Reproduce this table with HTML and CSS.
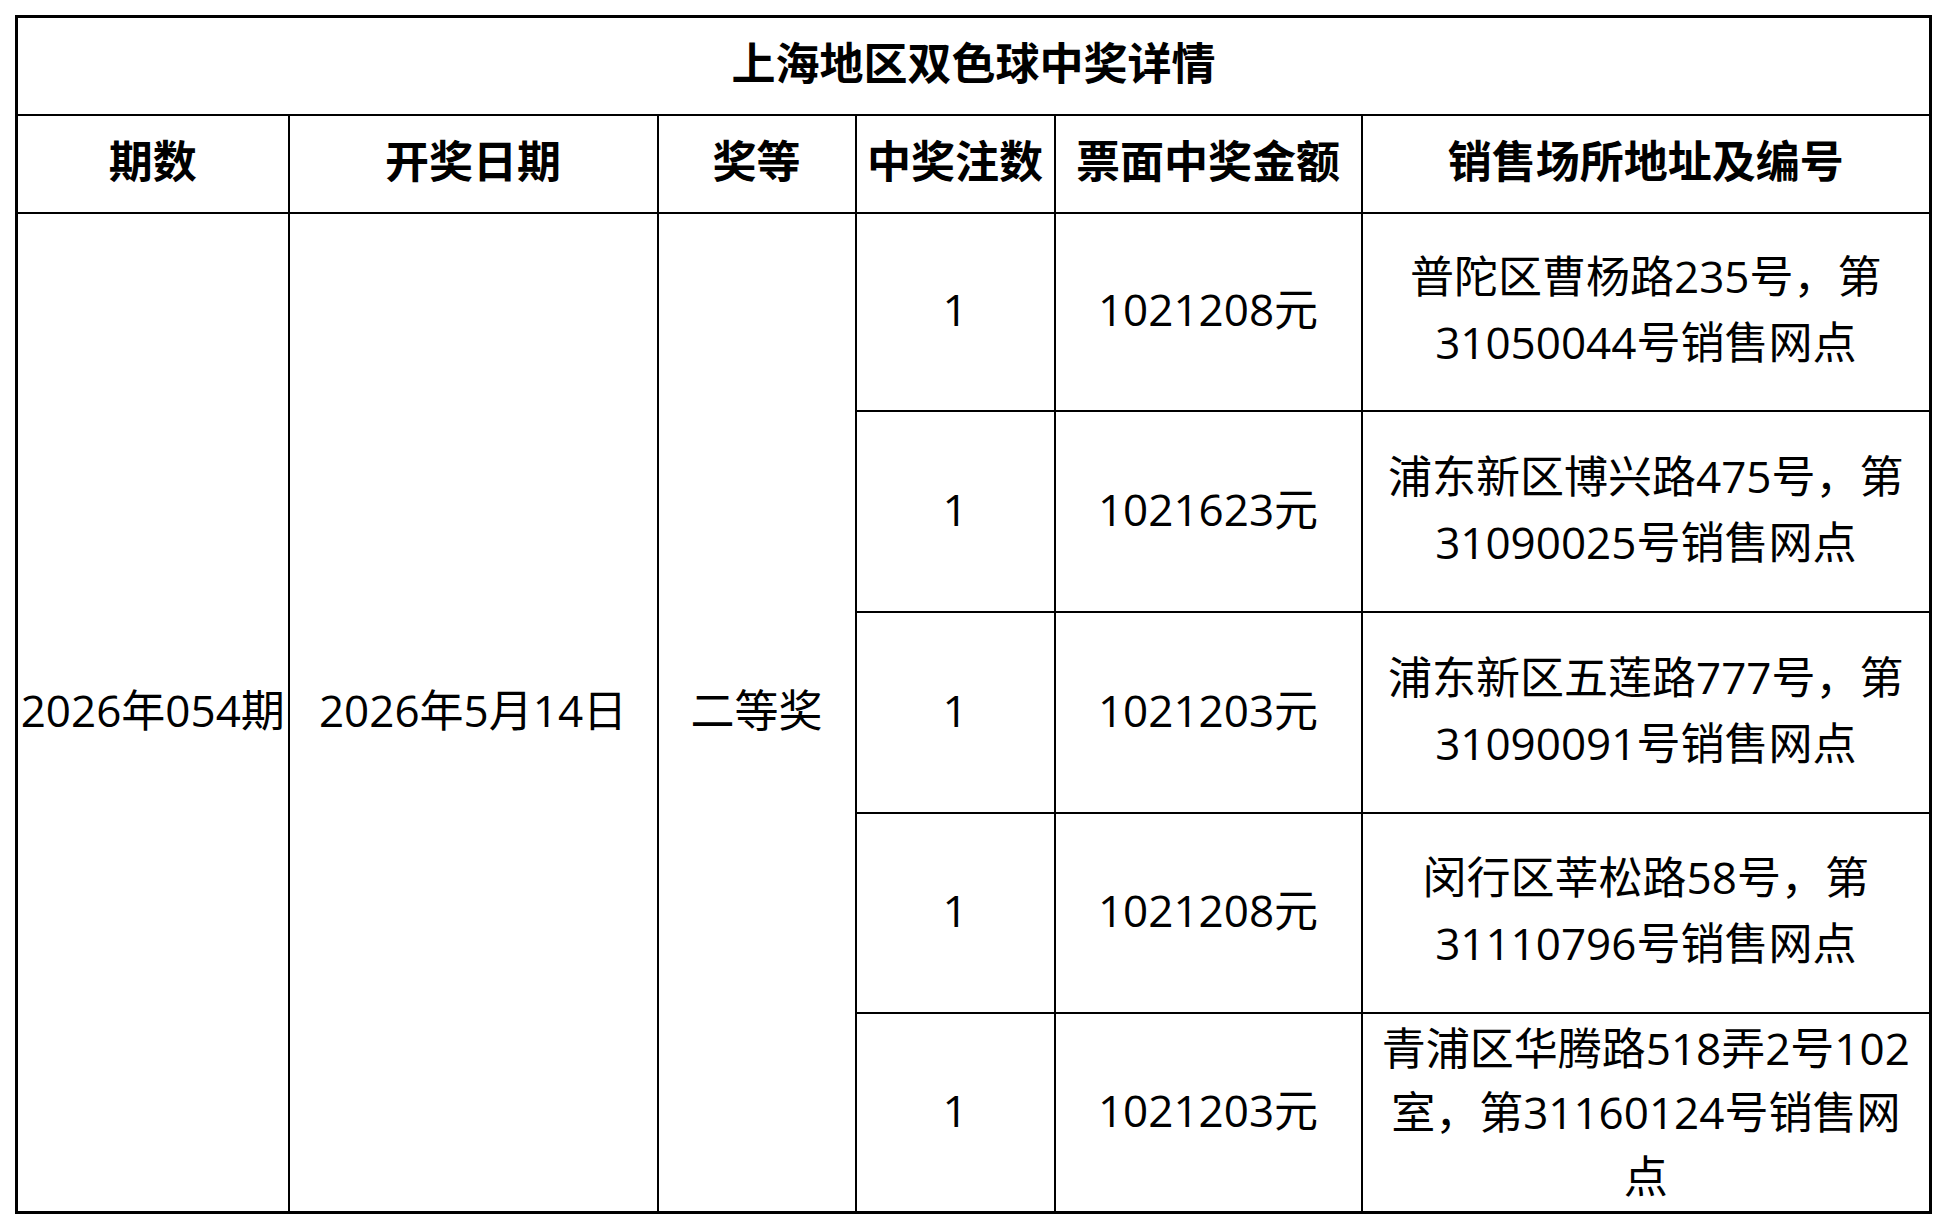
FILE: index.html
```html
<!DOCTYPE html>
<html lang="zh-CN">
<head>
<meta charset="utf-8">
<title>上海地区双色球中奖详情</title>
<link rel="stylesheet" href="styles.css">
</head>
<body>
<table class="prize-table">
  <colgroup>
    <col class="c-period">
    <col class="c-date">
    <col class="c-level">
    <col class="c-count">
    <col class="c-amount">
    <col class="c-addr">
  </colgroup>
  <thead>
    <tr class="title-row"><th colspan="6">上海地区双色球中奖详情</th></tr>
    <tr class="head-row">
      <th>期数</th>
      <th>开奖日期</th>
      <th>奖等</th>
      <th>中奖注数</th>
      <th>票面中奖金额</th>
      <th>销售场所地址及编号</th>
    </tr>
  </thead>
  <tbody>
    <tr class="r1">
      <td rowspan="5" class="nowrap">2026年054期</td>
      <td rowspan="5">2026年5月14日</td>
      <td rowspan="5">二等奖</td>
      <td>1</td>
      <td>1021208元</td>
      <td class="addr">普陀区曹杨路235号，第31050044号销售网点</td>
    </tr>
    <tr class="r2">
      <td>1</td>
      <td>1021623元</td>
      <td class="addr">浦东新区博兴路475号，第31090025号销售网点</td>
    </tr>
    <tr class="r3">
      <td>1</td>
      <td>1021203元</td>
      <td class="addr">浦东新区五莲路777号，第31090091号销售网点</td>
    </tr>
    <tr class="r4">
      <td>1</td>
      <td>1021208元</td>
      <td class="addr">闵行区莘松路58号，第31110796号销售网点</td>
    </tr>
    <tr class="r5">
      <td>1</td>
      <td>1021203元</td>
      <td class="addr addr-long">青浦区华腾路518弄2号102室，第31160124号销售网点</td>
    </tr>
  </tbody>
</table>
</body>
</html>
```

FILE: styles.css
```css
html, body {
  margin: 0;
  padding: 0;
  background: #ffffff;
}

body {
  padding: 15px 0 0 15px;
  font-family: "Open Sans", "Noto Sans CJK SC", sans-serif;
  color: #000000;
}

.prize-table {
  border-collapse: collapse;
  table-layout: fixed;
  width: 1914px;
  border: 3px solid #000;
  font-size: 44px;
  line-height: 66px;
}

.c-period { width: 272px; }
.c-date { width: 369px; }
.c-level { width: 198px; }
.c-count { width: 199px; }
.c-amount { width: 307px; }
.c-addr { width: 569px; }

.prize-table th,
.prize-table td {
  border: 2px solid #000;
  padding: 0 4px 6px;
  text-align: center;
  vertical-align: middle;
}

.prize-table th {
  font-weight: 700;
}

.title-row th {
  height: 90px;
  padding: 0 0 6px;
}

.head-row th {
  height: 90px;
  padding: 0 0 6px;
}

.prize-table td.nowrap {
  white-space: nowrap;
  padding: 0 0 6px;
}

.prize-table td.addr {
  padding: 0 12px 6px;
}

.prize-table td.addr-long {
  padding: 0 12px 2px;
  line-height: 64px;
}

.r1 td { height: 190px; }
.r2 td { height: 193px; }
.r3 td { height: 193px; }
.r4 td { height: 192px; }
.r5 td { height: 191px; }
```
